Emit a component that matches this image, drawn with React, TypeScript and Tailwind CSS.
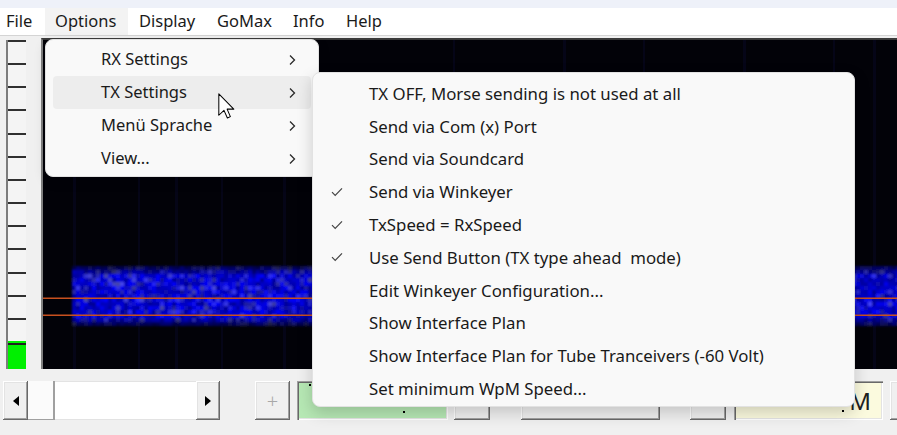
import React from "react";

// deterministic noise for the waterfall band
function rng(seed: number) {
  let a = seed;
  return () => {
    a |= 0;
    a = (a + 0x6d2b79f5) | 0;
    let t = Math.imul(a ^ (a >>> 15), 1 | a);
    t = (t + Math.imul(t ^ (t >>> 7), 61 | t)) ^ t;
    return ((t ^ (t >>> 14)) >>> 0) / 4294967296;
  };
}

const Waterfall = () => {
  const rand = rng(7);
  const cells: React.ReactNode[] = [];
  const top = 226;
  const rows = 15;
  for (let r = 0; r < rows; r++) {
    const edge = r === 0 || r === rows - 1 ? 0.45 : r === 1 || r === rows - 2 ? 0.75 : 1;
    for (let x = 29; x < 854; x += 4) {
      const v = rand();
      const b = Math.round((150 + v * 100) * edge);
      const g = Math.round(Math.pow(rand(), 5) * 70 * edge);
      cells.push(
        <rect key={r + "-" + x} x={x} y={top + r * 4} width={4} height={4} fill={`rgb(${g},${g},${b})`} />
      );
    }
  }
  const stripes = [30, 95, 132, 178, 240, 410, 520, 600, 700, 790, 830];
  return (
    <svg width={854} height={329} className="block">
      <rect width={854} height={329} fill="#020208" />
      {stripes.map((s, i) => (
        <rect key={i} x={s} y={0} width={i % 2 ? 2 : 3} height={329} fill="#08082a" opacity={0.45} />
      ))}
      <filter id="soft">
        <feGaussianBlur stdDeviation="1.1" />
      </filter>
      <g filter="url(#soft)">{cells}</g>
      <rect x={0} y={257.5} width={854} height={1.5} fill="#c8501e" />
      <rect x={0} y={274.5} width={854} height={1.5} fill="#c8501e" />
    </svg>
  );
};

const Chevron = () => (
  <svg width="8" height="12" viewBox="0 0 8 12">
    <path d="M2 1.5 L6.5 6 L2 10.5" fill="none" stroke="#2a2a2a" strokeWidth="1.3" />
  </svg>
);

const Check = () => (
  <svg width="12" height="10" viewBox="0 0 12 10">
    <path d="M1 5.2 L4.2 8.4 L11 1.4" fill="none" stroke="#444" strokeWidth="1.2" />
  </svg>
);

const raised =
  "shrink-0 bg-[#f0f0f0] shadow-[inset_-1px_-1px_0_#696969,inset_1px_1px_0_#ffffff,inset_-2px_-2px_0_#a0a0a0,inset_2px_2px_0_#e3e3e3]";
const sunken =
  "shrink-0 shadow-[inset_1px_1px_0_#a0a0a0,inset_2px_2px_0_#696969,inset_-1px_-1px_0_#ffffff,inset_-2px_-2px_0_#e3e3e3]";

const txItems = [
  { label: "TX OFF, Morse sending is not used at all", checked: false },
  { label: "Send via Com (x) Port", checked: false },
  { label: "Send via Soundcard", checked: false },
  { label: "Send via Winkeyer", checked: true },
  { label: "TxSpeed = RxSpeed", checked: true },
  { label: "Use Send Button (TX type ahead\u00a0 mode)", checked: true },
  { label: "Edit Winkeyer Configuration...", checked: false },
  { label: "Show Interface Plan", checked: false },
  { label: "Show Interface Plan for Tube Tranceivers (-60 Volt)", checked: false },
  { label: "Set minimum WpM Speed...", checked: false },
];

const App = () => {
  return (
    <div className="relative w-[897px] h-[435px] overflow-hidden bg-[#f0f0f0] flex flex-col font-['Noto_Sans',sans-serif] text-[#1a1a1a]">
      <div className="h-2 bg-[#eef1f9]" />
      {/* menu bar */}
      <div className="h-[28px] bg-white flex items-center border-b border-[#d4d4d4] text-[16.5px]">
        <div className="w-[45px] pl-[6px]">File</div>
        <div className="w-[83px] h-full pl-[10px] flex items-center bg-[#f3f3f3]">Options</div>
        <div className="w-[78px] pl-[11px]">Display</div>
        <div className="w-[77px] pl-[11px]">GoMax</div>
        <div className="w-[53px] pl-[10px]">Info</div>
        <div className="pl-[10px]">Help</div>
      </div>

      {/* ladder + waterfall */}
      <div className="h-[333px] flex pl-[6px] gap-[15px]">
        <div className="mt-[4px] w-[20px] h-[329px] flex flex-col border-l-2 border-[#7c7c7c] bg-[#f4f4f4]">
          {Array.from({ length: 13 }).map((_, i) => (
            <div key={i} className="flex-1 border-t-2 border-[#303030]" />
          ))}
          <div className="h-[28px] bg-[#00f000] pt-[2px]">
            <div className="h-[2px] bg-[#202020]" />
          </div>
        </div>
        <div className="mt-[2px] flex-1 border-l-2 border-t-2 border-l-[#808080] border-t-[#3a3a3a] overflow-hidden">
          <Waterfall />
        </div>
      </div>

      {/* bottom controls */}
      <div className="flex-1 flex items-start pt-[12px] pl-[3px]">
        <div className="flex h-[39px] shrink-0">
          <div className={`w-[25px] flex items-center justify-center ${raised}`}>
            <span className="block w-0 h-0 border-y-[5px] border-y-transparent border-r-[6px] border-r-black" />
          </div>
          <div className="w-[27px] shrink-0 bg-[#fbfbfb] shadow-[inset_-2px_0_0_#a0a0a0,inset_0_-1px_0_#a0a0a0]" />
          <div className="w-[141px] shrink-0 bg-white border-y border-[#e3e3e3]" />
          <div className={`w-[24px] flex items-center justify-center ${raised}`}>
            <span className="block w-0 h-0 border-y-[5px] border-y-transparent border-l-[6px] border-l-black" />
          </div>
        </div>
        <div className={`ml-[35px] w-[35px] h-[39px] flex items-center justify-center text-[#a8a8a8] text-[20px] font-light ${raised}`}>
          +
        </div>
        <div className={`relative ml-[7px] w-[151px] h-[39px] bg-[#b6e8b4] ${sunken}`}>
          <span className="absolute left-[12px] top-[3px] w-[2px] h-[2px] bg-black" />
          <span className="absolute left-[106px] top-[30px] w-[2px] h-[2px] bg-black" />
        </div>
        <div className={`ml-[6px] w-[36px] h-[39px] ${raised}`} />
        <div className={`ml-[31px] w-[139px] h-[39px] ${raised}`} />
        <div className={`ml-[30px] w-[36px] h-[39px] ${raised}`} />
        <div className={`relative ml-[8px] w-[149px] h-[39px] bg-[#fbfade] ${sunken} flex items-center justify-end pr-[12px] text-[24px] text-[#202020]`}>
          M
          <span className="absolute left-[108px] top-[29px] w-[2px] h-[2px] bg-black" />
        </div>
        <div className={`ml-[7px] w-[40px] h-[39px] ${raised}`} />
      </div>

      {/* Options dropdown */}
      <div className="absolute left-[45px] top-[39px] w-[274px] h-[138px] py-[3px] bg-[#f9f9f9] rounded-lg border border-[#e2e2e2] shadow-[0_4px_12px_rgba(0,0,0,0.15)] text-[16.5px]">
        {["RX Settings", "TX Settings", "Menü Sprache", "View..."].map((t, i) => (
          <div
            key={t}
            className={`h-[33px] mx-[7px] rounded-[4px] flex items-center pl-[48px] pr-[15px] ${i === 1 ? "bg-[#ededed]" : ""}`}
          >
            <span className="flex-1">{t}</span>
            <Chevron />
          </div>
        ))}
      </div>

      {/* TX Settings submenu */}
      <div className="absolute left-[312px] top-[72px] w-[543px] h-[335px] py-[4px] bg-[#f9f9f9] rounded-lg border border-[#e2e2e2] shadow-[0_6px_16px_rgba(0,0,0,0.18)] text-[16.8px]">
        {txItems.map((it) => (
          <div key={it.label} className="h-[32.8px] flex items-center">
            <span className="w-[56px] pl-[18px] flex items-center">{it.checked ? <Check /> : null}</span>
            <span className="whitespace-pre">{it.label}</span>
          </div>
        ))}
      </div>

      {/* mouse pointer */}
      <svg className="absolute left-[218px] top-[93px]" width="17" height="26" viewBox="0 0 12.5 19">
        <path
          d="M0.6 0.6 V16.3 L4.4 12.7 L6.9 18.3 L9.1 17.3 L6.7 11.8 H11.6 Z"
          fill="#fff"
          stroke="#000"
          strokeWidth="0.75"
          strokeLinejoin="round"
        />
      </svg>
    </div>
  );
};

export default App;
